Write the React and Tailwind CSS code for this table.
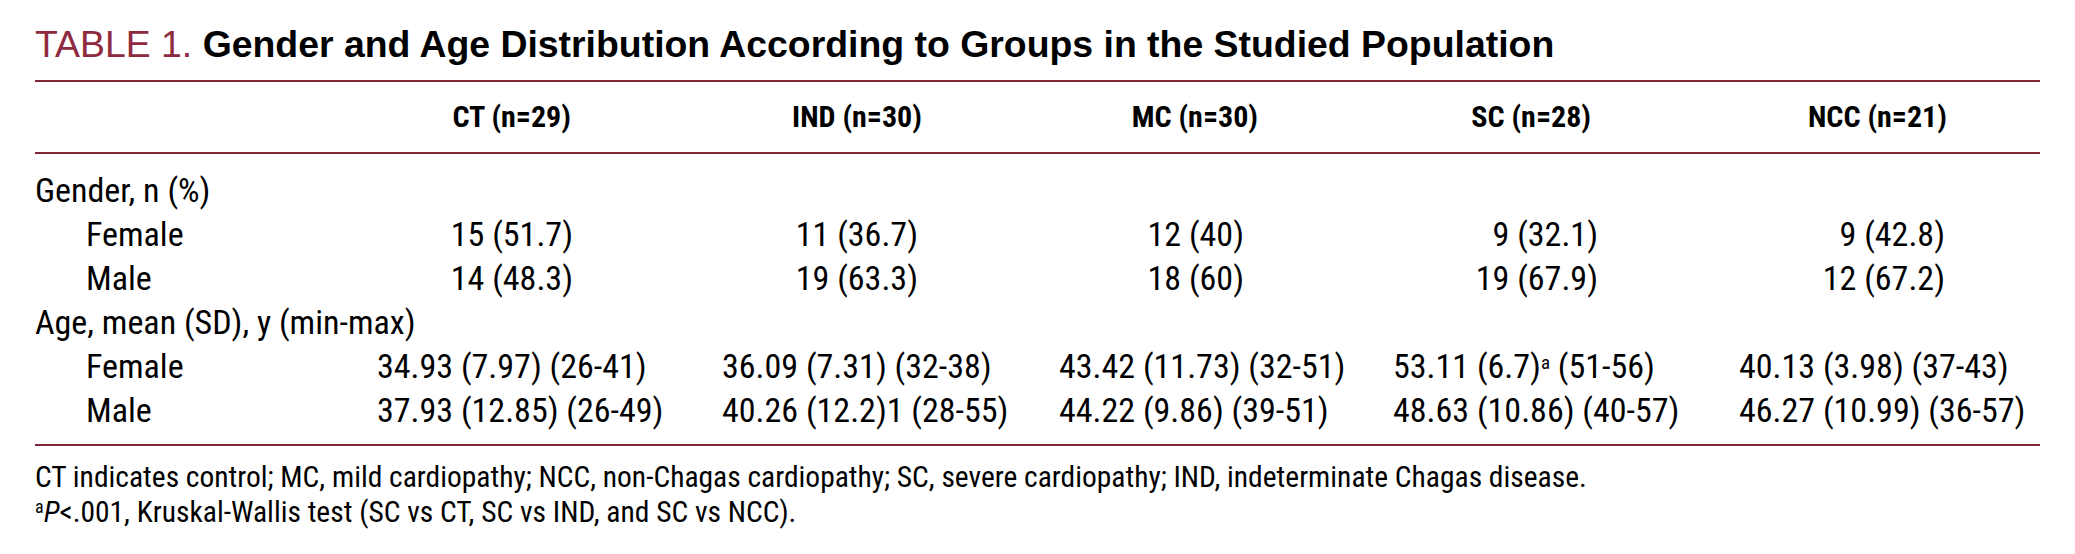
const COND = "font-['Roboto_Condensed','DejaVu_Sans_Condensed',sans-serif] font-stretch-condensed";

const groups = [
  { name: "CT (n=29)", head: "w-[194px]", val: "w-[196px]" },
  { name: "IND (n=30)", head: "w-[200px]", val: "w-[196px]" },
  { name: "MC (n=30)", head: "w-[199px]", val: "w-[185px]" },
  { name: "SC (n=28)", head: "w-[198px]", val: "w-[205px]" },
  { name: "NCC (n=21)", head: "w-[208px]", val: "w-[206px]" },
];

const rows = [
  { label: "Gender, n (%)" },
  { label: "Female", sub: true, kind: "count", cells: ["15 (51.7)", "11 (36.7)", "12 (40)", "9 (32.1)", "9 (42.8)"] },
  { label: "Male", sub: true, kind: "count", cells: ["14 (48.3)", "19 (63.3)", "18 (60)", "19 (67.9)", "12 (67.2)"] },
  { label: "Age, mean (SD), y (min-max)" },
  {
    label: "Female",
    sub: true,
    kind: "age",
    cells: [
      "34.93 (7.97) (26-41)",
      "36.09 (7.31) (32-38)",
      "43.42 (11.73) (32-51)",
      <>
        53.11 (6.7)<sup className="text-[19px] leading-none">a</sup> (51-56)
      </>,
      "40.13 (3.98) (37-43)",
    ],
  },
  {
    label: "Male",
    sub: true,
    kind: "age",
    cells: ["37.93 (12.85) (26-49)", "40.26 (12.2)1 (28-55)", "44.22 (9.86) (39-51)", "48.63 (10.86) (40-57)", "46.27 (10.99) (36-57)"],
  },
];

const GRID = "grid grid-cols-[342px_345px_337px_334px_346px_1fr]";

function Rule() {
  return <div className="h-[2px] bg-[#7d2636]" />;
}

export default function App() {
  return (
    <div className="h-[554px] w-[2075px] bg-white px-[35px] pt-[24px] text-black">
      <h1 className="h-[40px] whitespace-nowrap font-['Liberation_Sans',Arial,sans-serif] text-[37.4px] leading-[40px]">
        <span className="text-[#8f2a3f]">TABLE 1. </span>
        <span className="font-bold">Gender and Age Distribution According to Groups in the Studied Population</span>
      </h1>

      <div className="mt-[16px]">
        <Rule />
      </div>

      <div className={`${GRID} ${COND} py-[17px] text-[30px] font-bold leading-[36px]`}>
        <div />
        {groups.map((g) => (
          <div key={g.name} className={`${g.head} whitespace-nowrap text-right`}>
            {g.name}
          </div>
        ))}
      </div>

      <Rule />

      <div className={`${COND} pb-[12px] pt-[14px] text-[34px] leading-[44px]`}>
        {rows.map((row, i) => (
          <div key={i} className={`${GRID} h-[44px]`}>
            <div className={`whitespace-nowrap ${row.sub ? "pl-[51px]" : ""}`}>{row.label}</div>
            {row.cells &&
              row.cells.map((cell, j) => (
                <div
                  key={j}
                  className={`whitespace-nowrap ${row.kind === "count" ? `${groups[j].val} text-right` : "text-left"}`}
                >
                  {cell}
                </div>
              ))}
          </div>
        ))}
      </div>

      <Rule />

      <div className={`${COND} mt-[14px] text-[29.5px] leading-[35px]`}>
        <p className="whitespace-nowrap">
          CT indicates control; MC, mild cardiopathy; NCC, non-Chagas cardiopathy; SC, severe cardiopathy; IND, indeterminate Chagas disease.
        </p>
        <p className="whitespace-nowrap">
          <sup className="text-[18px] leading-none">a</sup>
          <i>P</i>&lt;.001, Kruskal-Wallis test (SC vs CT, SC vs IND, and SC vs NCC).
        </p>
      </div>
    </div>
  );
}
